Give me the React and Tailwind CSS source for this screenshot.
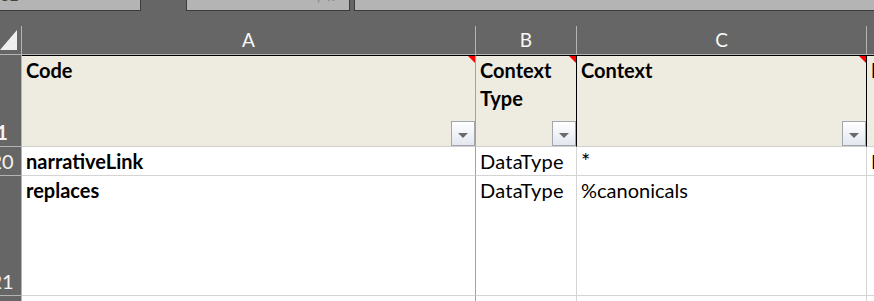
import React from "react";

const Dropdown = () => (
  <div className="mt-auto self-end w-[24px] h-[25px] border border-[#a3a6ad] bg-gradient-to-b from-[#ffffff] to-[#e3e7ef] flex items-center justify-center">
    <div className="mt-[3px] w-0 h-0 border-l-[5px] border-l-transparent border-r-[5px] border-r-transparent border-t-[5px] border-t-[#6a6a6a]" />
  </div>
);

const RedMark = () => (
  <div className="absolute top-0 right-0 w-0 h-0 border-l-[7px] border-l-transparent border-t-[7px] border-t-[#ff0000]" />
);

const RowNum = ({ n, h }) => (
  <div className={`w-[22px] ${h} shrink-0 overflow-hidden bg-[#666666] border-r border-b border-[#b4b4b4] flex items-end`}>
    <div className="w-[36px] ml-[-16px] shrink-0 text-center text-[20px] leading-[28px] text-[#f4f4f4]">{n}</div>
  </div>
);

export default function App() {
  return (
    <div className="w-[874px] h-[301px] overflow-hidden bg-white font-[Lato,sans-serif] text-black">
      {/* toolbar strip */}
      <div className="h-[11px] bg-[#666666] flex overflow-hidden">
        <div className="w-[141px] h-[11px] bg-[#b4b4b4] border-r border-b border-[#3c3c3c] overflow-hidden">
          <div className="mt-[-12px] pl-[1px] text-[15px] leading-[15px] text-[#444]">52</div>
        </div>
        <div className="ml-[45px] w-[164px] h-[11px] bg-[#b4b4b4] border-l border-r border-b border-[#3c3c3c] overflow-hidden">
          <div className="mt-[-12px] pl-[14px] text-[15px] leading-[15px] text-[#8a8a8a] tracking-[6px] italic">· · · · · · fx</div>
        </div>
        <div className="ml-[4px] flex-1 h-[11px] bg-[#b4b4b4] border-l border-b border-[#3c3c3c]" />
      </div>
      <div className="h-[15px] bg-[#666666]" />

      {/* column letters */}
      <div className="flex h-[29px] bg-[#666666] text-[19px] text-[#f8f8f8]">
        <div className="w-[22px] shrink-0 border-r border-b border-[#b4b4b4]">
          <svg width="21" height="28" className="block">
            <polygon points="0,24 17,24 17,4" fill="#efefef" />
          </svg>
        </div>
        <div className="w-[454px] shrink-0 border-r border-b border-[#b4b4b4] flex items-center justify-center">A</div>
        <div className="w-[101px] shrink-0 border-r border-b border-[#b4b4b4] flex items-center justify-center">B</div>
        <div className="w-[290px] shrink-0 border-r border-b border-[#b4b4b4] flex items-center justify-center">C</div>
        <div className="flex-1 border-b border-[#b4b4b4]" />
      </div>

      {/* header row */}
      <div className="flex h-[92px] text-[20px] leading-[28px] font-bold">
        <RowNum n="1" h="h-[92px]" />
        <div className="relative w-[454px] shrink-0 bg-[#eeebe0] border-t border-t-black border-r border-r-[#a2a2a2] border-b border-b-[#d0d0d0] pl-[4px] flex flex-col">
          <RedMark />
          <span>Code</span>
          <Dropdown />
        </div>
        <div className="relative w-[101px] shrink-0 bg-[#eeebe0] border-t border-t-black border-r border-r-black border-b border-b-[#d0d0d0] pl-[4px] flex flex-col">
          <RedMark />
          <span>Context Type</span>
          <Dropdown />
        </div>
        <div className="relative w-[290px] shrink-0 bg-[#eeebe0] border-t border-t-black border-r border-r-black border-b border-b-[#d0d0d0] pl-[4px] flex flex-col">
          <RedMark />
          <span>Context</span>
          <Dropdown />
        </div>
        <div className="flex-1 bg-[#eeebe0] border-t border-t-black border-b border-b-[#d0d0d0] pl-[4px] overflow-hidden whitespace-nowrap">
          Name
        </div>
      </div>

      {/* data rows */}
      <div className="flex h-[29px] text-[20px] leading-[28px]">
        <RowNum n="20" h="h-[29px]" />
        <div className="w-[454px] shrink-0 border-r border-r-[#a2a2a2] border-b border-b-[#d4d4d4] pl-[4px] font-bold">narrativeLink</div>
        <div className="w-[101px] shrink-0 border-r border-b border-[#d4d4d4] pl-[4px] tracking-[0.3px]">DataType</div>
        <div className="w-[290px] shrink-0 border-r border-b border-[#d4d4d4] pl-[4px] text-[22px]">*</div>
        <div className="flex-1 border-b border-[#d4d4d4] pl-[4px] overflow-hidden whitespace-nowrap">Narrative</div>
      </div>
      <div className="flex h-[120px] text-[20px] leading-[28px]">
        <RowNum n="21" h="h-[120px]" />
        <div className="w-[454px] shrink-0 border-r border-r-[#a2a2a2] border-b border-b-[#d4d4d4] pl-[4px] font-bold">replaces</div>
        <div className="w-[101px] shrink-0 border-r border-b border-[#d4d4d4] pl-[4px] tracking-[0.3px]">DataType</div>
        <div className="w-[290px] shrink-0 border-r border-b border-[#d4d4d4] pl-[4px]">%canonicals</div>
        <div className="flex-1 border-b border-[#d4d4d4]" />
      </div>
      <div className="flex h-[20px]">
        <div className="w-[22px] h-[20px] shrink-0 bg-[#666666] border-r border-[#b4b4b4]" />
        <div className="w-[454px] shrink-0 border-r border-r-[#a2a2a2]" />
        <div className="w-[101px] shrink-0 border-r border-[#d4d4d4]" />
        <div className="w-[290px] shrink-0 border-r border-[#d4d4d4]" />
        <div className="flex-1" />
      </div>
    </div>
  );
}
